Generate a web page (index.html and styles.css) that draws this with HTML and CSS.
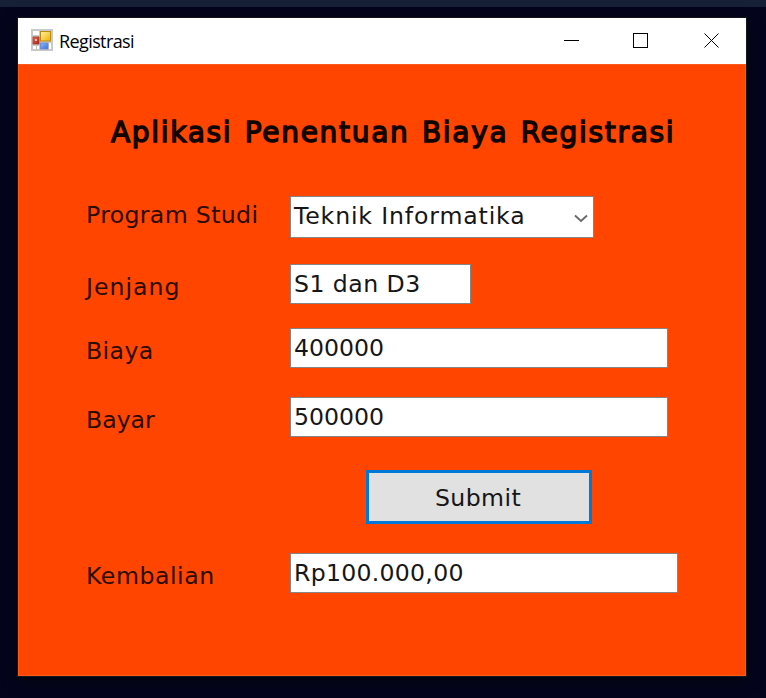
FILE: index.html
```html
<!DOCTYPE html>
<html lang="id">
<head>
<meta charset="utf-8">
<title>Registrasi</title>
<link rel="stylesheet" href="styles.css">
</head>
<body>
<main class="window">
  <header class="titlebar">
    <svg class="app-icon" width="22" height="22" viewBox="0 0 22 22">
      <defs>
        <linearGradient id="gold" x2="1" y2="1"><stop stop-color="#fff3a0"/><stop offset="1" stop-color="#f0b000"/></linearGradient>
        <linearGradient id="red" x2="1" y2="1"><stop stop-color="#e8705c"/><stop offset="1" stop-color="#a81c10"/></linearGradient>
        <linearGradient id="blue" x2="1" y2="1"><stop stop-color="#8ab8ff"/><stop offset="1" stop-color="#3b6fd8"/></linearGradient>
      </defs>
      <rect width="22" height="22" fill="#c9c9c9"/>
      <path fill="#fff" d="M2 2h6v4H2zM2 17h3v3H2zM6 17h2v3H6zM18 14h2v6h-2z"/>
      <rect x="9.5" y="2.500" width="10" height="9.500" fill="url(#gold)" stroke="#b98b10"/>
      <rect x="2" y="8" width="6" height="7" fill="url(#red)" stroke="#a8382c" stroke-width=".8"/>
      <rect x="4" y="10" width="2" height="2" fill="#f3b4a8"/>
      <rect x="9.500" y="14" width="7.500" height="6" fill="url(#blue)" stroke="#6689cc" stroke-width=".8"/>
    </svg>
    <span class="caption">Registrasi</span>
    <svg class="controls" width="158" height="16" viewBox="0 0 158 16" fill="none" stroke="#000" shape-rendering="crispEdges">
      <path d="M0 8.500h15M69.500 1.500h14v14h-14z"/>
      <path d="M140.500 1.500l14 14M154.500 1.500l-14 14" shape-rendering="auto"/>
    </svg>
  </header>
  <form class="client">
    <h1 class="heading">Aplikasi Penentuan Biaya Registrasi</h1>
    <div class="row program">
      <span class="label">Program Studi</span>
      <div class="field select"><span class="value">Teknik Informatika</span>
        <svg width="14" height="9" viewBox="0 0 14 9" fill="none" stroke="#686868" stroke-width="1.800"><path d="M1 1.500l6 5.500 6-5.500"/></svg>
      </div>
    </div>
    <div class="row level"><span class="label">Jenjang</span><div class="field short"><span class="value">S1 dan D3</span></div></div>
    <div class="row cost"><span class="label">Biaya</span><div class="field"><span class="value">400000</span></div></div>
    <div class="row pay"><span class="label">Bayar</span><div class="field"><span class="value">500000</span></div></div>
    <button class="submit" type="button">Submit</button>
    <div class="row change"><span class="label">Kembalian</span><div class="field wide"><span class="value">Rp100.000,00</span></div></div>
  </form>
</main>
</body>
</html>
```
FILE: styles.css
```css
* { box-sizing: border-box; }
body {
  margin: 0;
  height: 698px;
  padding: 18px 20px 22px 18px;
  background: linear-gradient(#162036 7px, #04041d 7px);
  overflow: hidden;
  font-family: "DejaVu Sans", sans-serif;
}
.window {
  height: 658px;
  background: #ff4500;
  box-shadow: 0 0 0 1px #15171f, 0 4px 14px #05070c;
}
.titlebar {
  height: 46px;
  display: flex;
  align-items: center;
  padding: 0 24px 0 13px;
  background: #fff;
}
.app-icon { margin-bottom: 2px; }
.caption {
  margin: 0 auto 0 6px;
  font: 18px/24px "Open Sans", sans-serif;
  letter-spacing: -0.6px;
  color: #000;
}
.controls { margin-bottom: 2px; }
.client {
  height: 612px;
  border: 1px solid #ff5a1c;
  padding: 0 0 0 67px;
}
.heading {
  margin: 0;
  padding: 51px 0 0 25px;
  height: 131px;
  font-size: 28px;
  line-height: 34px;
  font-weight: 400;
  letter-spacing: 1.7px;
  word-spacing: 1.8px;
  white-space: nowrap;
  color: #100500;
  -webkit-text-stroke: 1.4px #100500;
}
.row {
  display: grid;
  grid-template-columns: 204px 1fr;
  height: 40px;
}
.label {
  font-size: 23.6px;
  line-height: 28px;
  padding-top: 9px;
  white-space: nowrap;
  color: #2a0c00;
}
.field {
  width: 378px;
  height: 40px;
  border: 1px solid #858585;
  background: #fff;
  padding: 5px 3px;
  font-size: 23.6px;
  line-height: 28px;
  color: #161616;
  white-space: nowrap;
}
.program { height: 42px; }
.program .label { padding-top: 5px; letter-spacing: 0.35px; }
.select {
  width: 304px;
  height: 42px;
  display: flex;
  justify-content: space-between;
  padding-right: 5px;
  letter-spacing: 0.85px;
}
.select svg { margin-top: 12px; }
.short { width: 181px; letter-spacing: 0.45px; }
.wide { width: 388px; letter-spacing: 0.27px; }
.level { margin-top: 26px; }
.level .label { letter-spacing: 1px; }
.cost { margin-top: 24px; }
.cost .label { letter-spacing: 0.4px; }
.pay { margin-top: 29px; }
.submit {
  display: block;
  width: 226px;
  height: 54px;
  margin: 33px 0 0 280px;
  padding: 2px 2px 0 0;
  border: 3px solid #0078d7;
  background: #e1e1e1;
  font: 23.6px/28px "DejaVu Sans", sans-serif;
  letter-spacing: 0.4px;
  color: #161616;
}
.change { margin-top: 29px; }
.change .label { letter-spacing: 0.55px; }
```
